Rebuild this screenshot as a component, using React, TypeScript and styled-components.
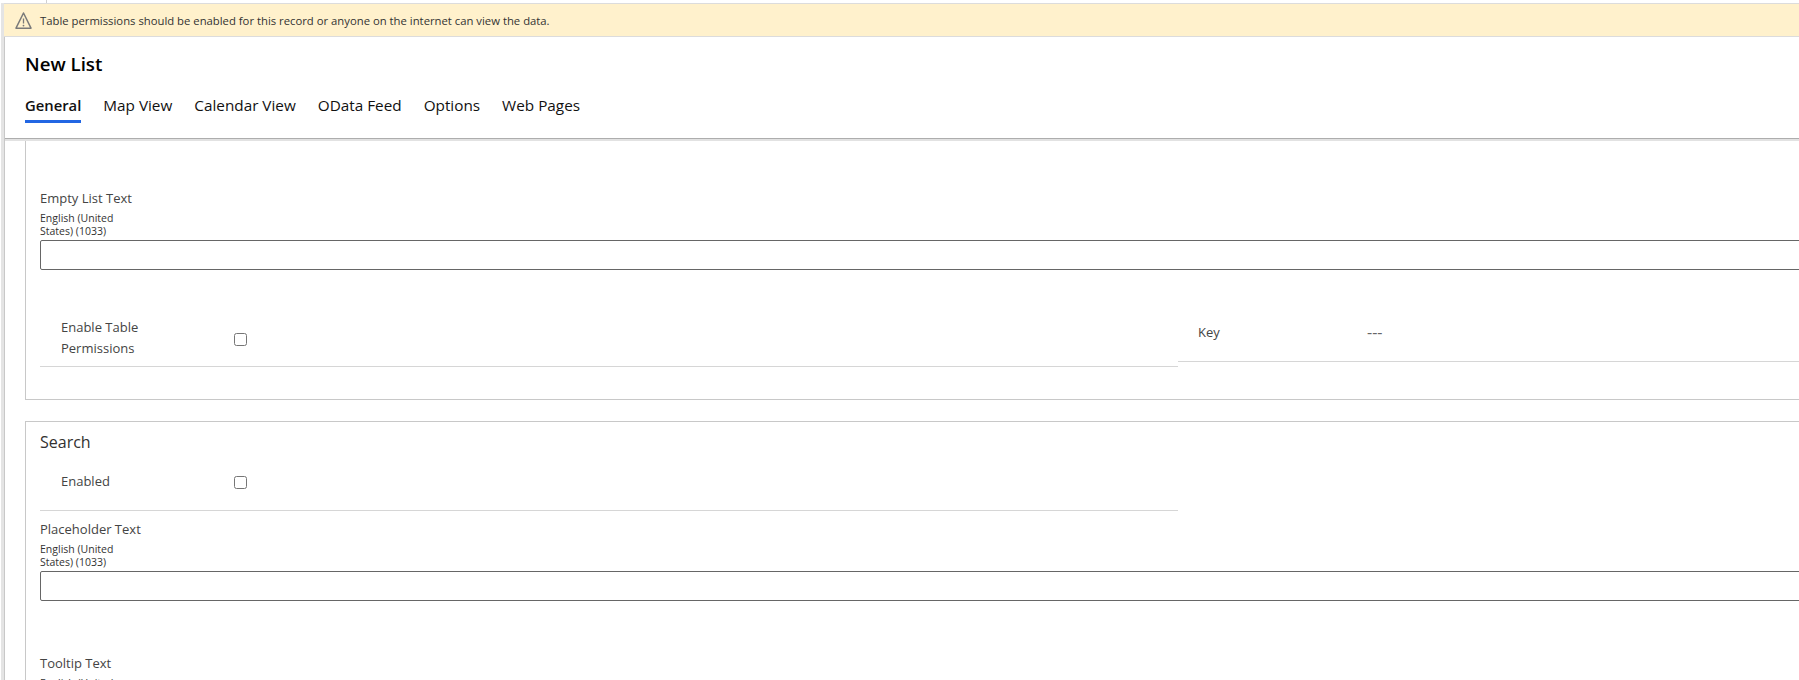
import React from "react";
import styled, { createGlobalStyle } from "styled-components";

const GlobalStyle = createGlobalStyle`
  html, body {
    margin: 0;
    padding: 0;
    height: 100%;
    background: #fff;
    overflow: hidden;
  }
  body {
    font-family: "Open Sans", "Noto Sans", sans-serif;
    color: #323130;
  }
`;

const Page = styled.div`
  height: 680px;
  overflow: hidden;
  background: #fff;
`;

const TopStrip = styled.div`
  height: 3px;
  padding-left: 46px;
`;

const StripTick = styled.div`
  width: 1px;
  height: 100%;
  background: #d0d0d0;
`;

const Shell = styled.div`
  border-left: 1px solid #c8c8c8;
  box-shadow: -3px 0 0 #e4e4e4;
  margin-left: 4px;
`;

const Banner = styled.div`
  display: flex;
  align-items: center;
  height: 32px;
  margin-left: -1px;
  padding-left: 11px;
  background: #fff1cc;
  border-top: 1px solid #dcdcdc;
  border-bottom: 1px solid #dcdcdc;
  font-size: 11.3px;
  color: #333;
`;

const WarnIcon = styled.svg`
  width: 17px;
  height: 19px;
  margin-right: 8px;
  flex: none;
`;

const Header = styled.header`
  height: 102px;
  padding: 13px 0 0 20px;
  box-sizing: border-box;
  border-bottom: 1px solid #adadad;
  box-shadow: 0 2px 0 #e2e2e2;
`;

const Title = styled.h1`
  margin: 0;
  font-size: 18.7px;
  line-height: 28px;
  font-weight: 600;
  color: #000;
`;

const Tabs = styled.nav`
  display: flex;
  gap: 22px;
  margin-top: 16px;
`;

const Tab = styled.div<{ $active?: boolean }>`
  font-size: ${({ $active }) => ($active ? 14.8 : 15.3)}px;
  line-height: 22px;
  padding-bottom: 4px;
  color: #111;
  font-weight: ${({ $active }) => ($active ? 600 : 400)};
  border-bottom: 3px solid ${({ $active }) => ($active ? "#2266e3" : "transparent")};
`;

const Content = styled.main`
  padding: 2px 0 0 20px;
`;

const Section = styled.section<{ $open?: boolean }>`
  display: flow-root;
  width: 1900px;
  box-sizing: border-box;
  padding-left: 14px;
  border: 1px solid #c8c8c8;
  border-top-width: ${({ $open }) => ($open ? 0 : "1px")};
  margin-bottom: 21px;
`;

const SectionTitle = styled.h2`
  margin: 8px 0 17px;
  font-size: 16px;
  line-height: 24px;
  font-weight: 400;
  color: #323130;
`;

const Field = styled.div<{ $top?: number; $bottom?: number }>`
  margin-top: ${({ $top }) => $top ?? 0}px;
  margin-bottom: ${({ $bottom }) => $bottom ?? 0}px;
`;

const FieldLabel = styled.div`
  font-size: 13px;
  line-height: 20px;
  color: #444;
`;

const LangLabel = styled.div`
  width: 90px;
  margin-top: 4px;
  font-size: 10.5px;
  line-height: 13px;
  color: #333;
`;

const TextBox = styled.input`
  display: block;
  width: 100%;
  height: 30px;
  margin-top: 2px;
  box-sizing: border-box;
  border: 1px solid #666;
  border-radius: 2px;
  background: #fff;
`;

const Columns = styled.div`
  display: flex;
  align-items: flex-start;
  margin-bottom: 32px;
`;

const Row = styled.div<{ $width: string; $pad: string; $indent: number }>`
  display: flex;
  align-items: center;
  width: ${({ $width }) => $width};
  box-sizing: border-box;
  padding: ${({ $pad }) => $pad};
  padding-left: ${({ $indent }) => $indent}px;
  border-bottom: 1px solid #d6d6d6;
`;

const LabelCell = styled.div<{ $width: number }>`
  width: ${({ $width }) => $width}px;
  flex: none;
`;

const RowLabel = styled.div`
  max-width: 100px;
  font-size: 13px;
  line-height: 21px;
  color: #444;
`;

const RowValue = styled.div`
  font-size: 16px;
  line-height: 21px;
  color: #666;
`;

const Check = styled.input<{ $top: number }>`
  width: 13px;
  height: 13px;
  margin: ${({ $top }) => $top}px 0 0;
  flex: none;
`;

const Warning = () => (
  <WarnIcon viewBox="0 0 17 19">
    <path d="M8.5 2 L16 17.2 H1 Z" fill="none" stroke="#7a7a7a" strokeWidth="1.5" strokeLinejoin="round" />
    <path d="M8.5 7.5 V12.5" stroke="#7a7a7a" strokeWidth="1.3" />
    <circle cx="8.5" cy="14.6" r="0.9" fill="#7a7a7a" />
  </WarnIcon>
);

const tabNames = ["General", "Map View", "Calendar View", "OData Feed", "Options", "Web Pages"];

export default function App() {
  return (
    <Page>
      <GlobalStyle />
      <TopStrip>
        <StripTick />
      </TopStrip>
      <Shell>
        <Banner>
          <Warning />
          Table permissions should be enabled for this record or anyone on the internet can view the data.
        </Banner>
        <Header>
          <Title>New List</Title>
          <Tabs>
            {tabNames.map((name, i) => (
              <Tab key={name} $active={i === 0}>
                {name}
              </Tab>
            ))}
          </Tabs>
        </Header>
        <Content>
          <Section $open>
            <Field $top={47} $bottom={47}>
              <FieldLabel>Empty List Text</FieldLabel>
              <LangLabel>English (United States) (1033)</LangLabel>
              <TextBox />
            </Field>
            <Columns>
              <Row $width="1138px" $pad="0 0 7px" $indent={21}>
                <LabelCell $width={173}>
                  <RowLabel>Enable Table Permissions</RowLabel>
                </LabelCell>
                <Check type="checkbox" $top={3} />
              </Row>
              <Row $width="720px" $pad="5px 0 18px" $indent={20}>
                <LabelCell $width={169}>
                  <RowLabel>Key</RowLabel>
                </LabelCell>
                <RowValue>---</RowValue>
              </Row>
            </Columns>
          </Section>
          <Section>
            <SectionTitle>Search</SectionTitle>
            <Row $width="1138px" $pad="0 0 18px" $indent={21}>
              <LabelCell $width={173}>
                <RowLabel>Enabled</RowLabel>
              </LabelCell>
              <Check type="checkbox" $top={2} />
            </Row>
            <Field $top={8} $bottom={52}>
              <FieldLabel>Placeholder Text</FieldLabel>
              <LangLabel>English (United States) (1033)</LangLabel>
              <TextBox />
            </Field>
            <Field>
              <FieldLabel>Tooltip Text</FieldLabel>
              <LangLabel>English (United States) (1033)</LangLabel>
              <TextBox />
            </Field>
          </Section>
        </Content>
      </Shell>
    </Page>
  );
}
